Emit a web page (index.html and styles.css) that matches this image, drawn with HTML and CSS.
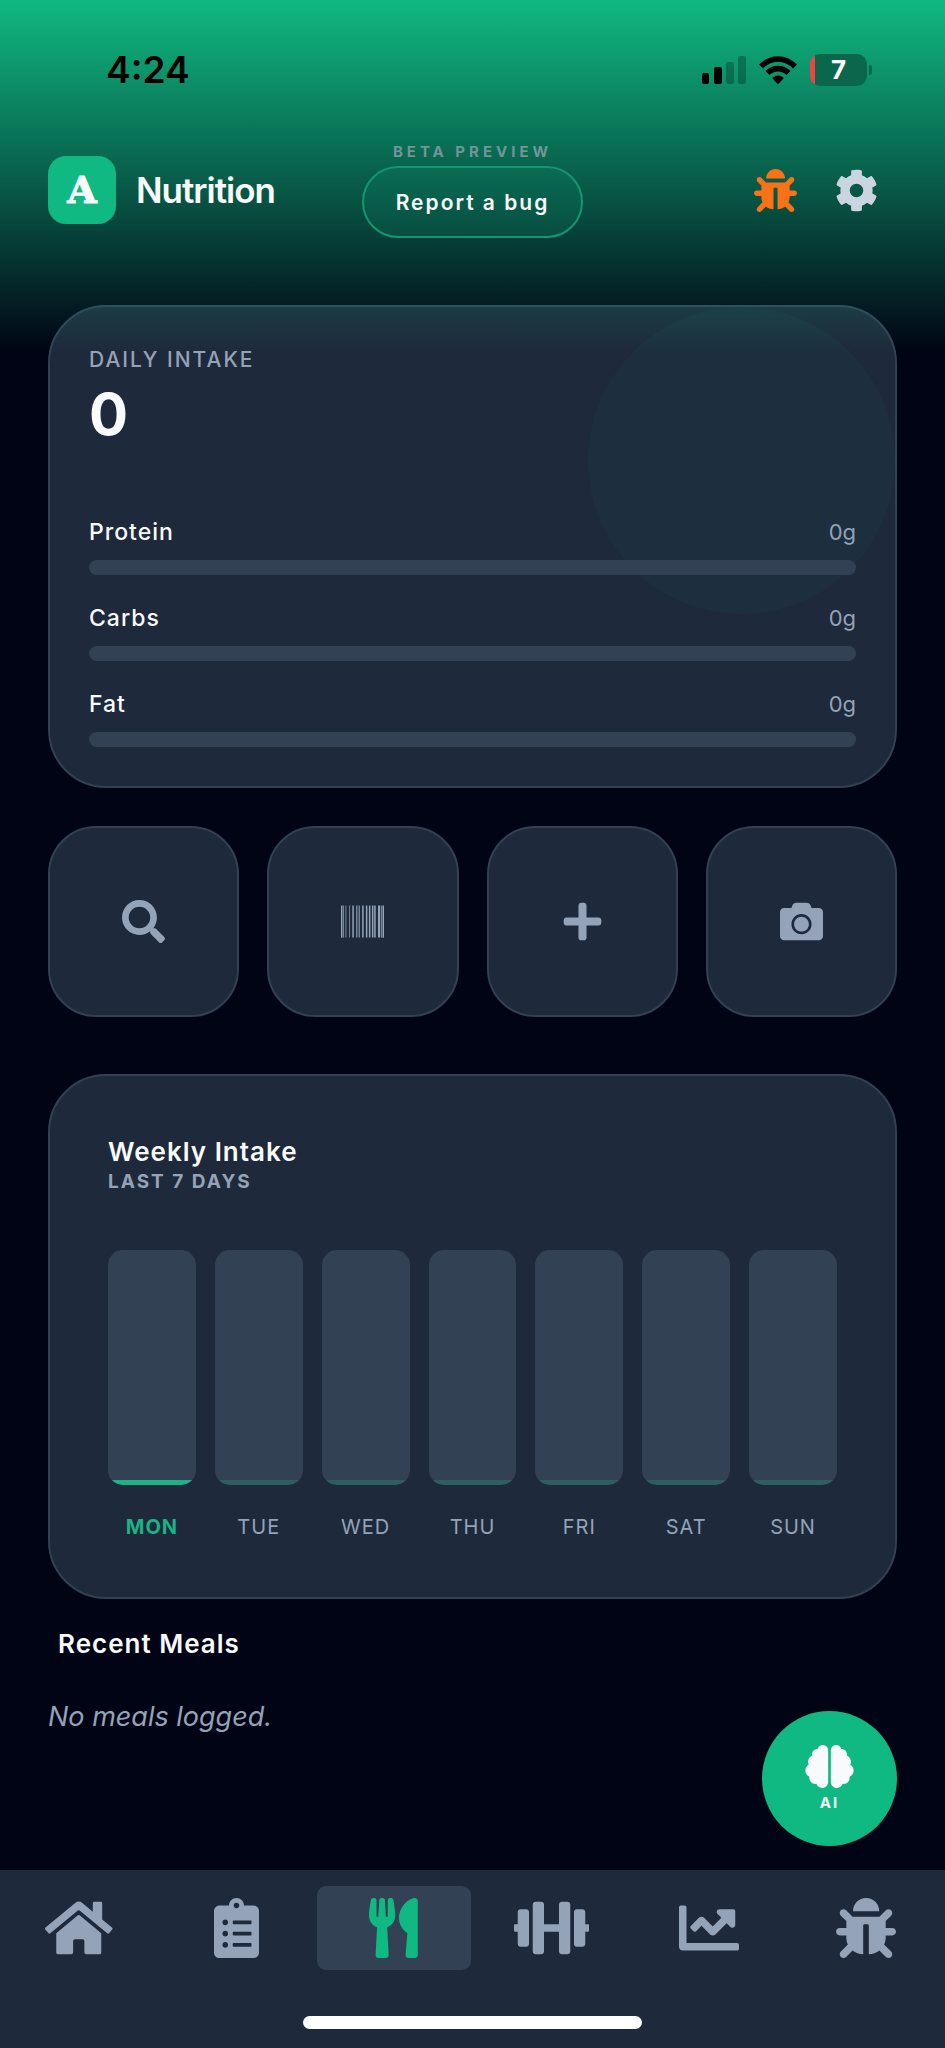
FILE: index.html
```html
<!DOCTYPE html>
<html lang="en">
<head>
<meta charset="utf-8">
<meta name="viewport" content="width=device-width, initial-scale=1">
<title>Nutrition</title>
<link rel="stylesheet" href="styles.css">
</head>
<body class="app">
<svg class="sprite" aria-hidden="true">
  <symbol id="bug" viewBox="0 0 512 512"><path d="M511.988 288.9c-.478 17.43-15.217 31.1-32.653 31.1H424v16c0 21.864-4.882 42.584-13.6 61.145l60.228 60.228c12.496 12.497 12.496 32.758 0 45.255-12.498 12.497-32.759 12.496-45.256 0l-54.736-54.736C345.886 467.965 314.351 480 280 480V236c0-6.627-5.373-12-12-12h-24c-6.627 0-12 5.373-12 12v244c-34.351 0-65.886-12.035-90.636-32.108l-54.736 54.736c-12.498 12.497-32.759 12.496-45.256 0-12.496-12.497-12.496-32.758 0-45.255l60.228-60.228C92.882 378.584 88 357.864 88 336v-16H32.666C15.23 320 .491 306.33.013 288.9-.484 270.816 14.028 256 32 256h56v-58.745l-46.628-46.628c-12.496-12.497-12.496-32.758 0-45.255 12.498-12.497 32.758-12.497 45.256 0L141.255 160h229.489l54.627-54.627c12.498-12.497 32.758-12.497 45.256 0 12.496 12.497 12.496 32.758 0 45.255L424 197.255V256h56c17.972 0 32.484 14.816 31.988 32.9zM257 0c-61.856 0-112 50.144-112 112h224C369 50.144 318.856 0 257 0z"/></symbol>
</svg>
<div class="glow"></div>

<div class="status">
  <span class="status-time">4:24</span>
  <div class="status-icons">
    <svg class="signal" viewBox="0 0 44 28" aria-hidden="true">
      <rect x="0" y="17" width="7" height="11" rx="2"/><rect x="12" y="11" width="8" height="17" rx="2"/>
      <g opacity=".25"><rect x="24" y="6" width="8" height="22" rx="2"/><rect x="36" y="0" width="8" height="28" rx="2"/></g>
    </svg>
    <svg class="wifi" viewBox="0 0 38 28" aria-hidden="true">
      <g fill="none" stroke="#000" stroke-width="5.6"><path d="M2 10.5Q9.500 3 19 3Q28.500 3 36 10.500"/><path d="M8.500 17Q13 12.600 19 12.600Q25 12.600 29.500 17"/></g>
      <path d="M13.200 22Q19 17.200 24.800 22L20.200 27.200Q19 28.400 17.800 27.200Z"/>
    </svg>
    <div class="battery"><span class="battery-text">7</span></div>
  </div>
</div>

<header class="header">
  <div class="brand"><span class="logo">A</span><h1 class="brand-name">Nutrition</h1></div>
  <div class="beta"><span class="beta-label">BETA PREVIEW</span><button class="report" type="button">Report a bug</button></div>
  <div class="tools">
    <button class="tool tool-bug" type="button" aria-label="Bug"><svg viewBox="0 0 512 512"><use href="#bug"/></svg></button>
    <button class="tool tool-cog" type="button" aria-label="Settings"><svg viewBox="0 0 512 512"><path d="M487.4 315.7l-42.6-24.6c4.3-23.2 4.3-47 0-70.2l42.6-24.6c4.9-2.8 7.1-8.6 5.5-14-11.1-35.6-30-67.8-54.7-94.6-3.8-4.1-10-5.1-14.8-2.3L380.8 110c-17.9-15.4-38.5-27.3-60.8-35.1V25.8c0-5.600-3.900-10.500-9.400-11.700-36.700-8.200-74.300-7.800-109.200 0-5.500 1.200-9.400 6.100-9.400 11.700V75c-22.200 7.900-42.800 19.800-60.800 35.100L88.700 85.500c-4.900-2.800-11-1.900-14.800 2.300-24.700 26.700-43.600 58.900-54.700 94.600-1.700 5.400.6 11.200 5.500 14L67.300 221c-4.300 23.200-4.300 47 0 70.200l-42.600 24.600c-4.900 2.800-7.100 8.600-5.500 14 11.100 35.600 30 67.800 54.700 94.600 3.800 4.100 10 5.100 14.800 2.300l42.600-24.600c17.900 15.400 38.500 27.300 60.800 35.100v49.200c0 5.600 3.900 10.500 9.400 11.700 36.700 8.200 74.300 7.800 109.200 0 5.500-1.200 9.400-6.100 9.400-11.700v-49.200c22.200-7.900 42.800-19.800 60.800-35.100l42.600 24.600c4.900 2.800 11 1.900 14.800-2.300 24.700-26.700 43.600-58.900 54.700-94.600 1.500-5.500-.7-11.300-5.600-14.100zM256 336c-44.100 0-80-35.900-80-80s35.900-80 80-80 80 35.900 80 80-35.900 80-80 80z"/></svg></button>
  </div>
</header>

<main class="content">
  <section class="card daily">
    <div class="halo"></div>
    <h2 class="daily-label">DAILY INTAKE</h2>
    <p class="daily-value">0</p>
    <div class="macros">
      <div class="macro"><div class="macro-head"><span class="macro-name">Protein</span><span class="macro-value">0g</span></div><div class="track"></div></div>
      <div class="macro"><div class="macro-head"><span class="macro-name">Carbs</span><span class="macro-value">0g</span></div><div class="track"></div></div>
      <div class="macro"><div class="macro-head"><span class="macro-name">Fat</span><span class="macro-value">0g</span></div><div class="track"></div></div>
    </div>
  </section>

  <div class="actions">
    <button class="action" type="button" aria-label="Search"><svg class="icon-md" viewBox="0 0 512 512"><path d="M505 442.700L405.300 343c-4.500-4.500-10.600-7-17-7H372c27.600-35.300 44-79.700 44-128C416 93.100 322.900 0 208 0S0 93.100 0 208s93.100 208 208 208c48.300 0 92.700-16.400 128-44v16.300c0 6.400 2.500 12.500 7 17l99.700 99.700c9.400 9.400 24.600 9.400 33.900 0l28.300-28.300c9.400-9.400 9.400-24.600.1-34zM208 336c-70.700 0-128-57.200-128-128 0-70.700 57.200-128 128-128 70.700 0 128 57.200 128 128 0 70.700-57.200 128-128 128z"/></svg></button>
    <button class="action" type="button" aria-label="Scan barcode"><svg class="icon-md" viewBox="0 0 512 512"><path d="M0 448V64h18v384H0zm26.857-.273V64H36v383.727h-9.143zm27.143 0V64h8.857v383.727H54zm44.857 0V64h8.857v383.727h-8.857zm36 0V64h17.714v383.727h-17.714zm44.857 0V64h8.857v383.727h-8.857zm18 0V64h8.857v383.727h-8.857zm18 0V64h8.857v383.727h-8.857zm35.715 0V64h18v383.727h-18zm44.857 0V64h18v383.727h-18zm35.999 0V64h18.001v383.727h-18.001zm36.001 0V64h18.001v383.727h-18.001zm26.857 0V64h18v383.727h-18zm45.143 0V64h26.857v383.727h-26.857zm35.714 0V64h9.143v383.727H476zm18 .273V64h18v384h-18z"/></svg></button>
    <button class="action" type="button" aria-label="Add"><svg class="icon-md" viewBox="-32 0 512 512"><path d="M416 208H272V64c0-17.670-14.330-32-32-32h-32c-17.670 0-32 14.330-32 32v144H32c-17.670 0-32 14.330-32 32v32c0 17.670 14.330 32 32 32h144v144c0 17.670 14.330 32 32 32h32c17.670 0 32-14.330 32-32V304h144c17.670 0 32-14.330 32-32v-32c0-17.670-14.330-32-32-32z"/></svg></button>
    <button class="action" type="button" aria-label="Take photo"><svg class="icon-md" viewBox="0 0 512 512"><path d="M512 144v288c0 26.500-21.500 48-48 48H48c-26.500 0-48-21.500-48-48V144c0-26.500 21.500-48 48-48h88l12.300-32.900c7-18.700 24.900-31.100 44.900-31.100h125.500c20 0 37.900 12.400 44.900 31.100L376 96h88c26.500 0 48 21.500 48 48zM376 288c0-66.200-53.800-120-120-120s-120 53.800-120 120 53.800 120 120 120 120-53.800 120-120zm-32 0c0 48.500-39.500 88-88 88s-88-39.500-88-88 39.500-88 88-88 88 39.500 88 88z"/></svg></button>
  </div>

  <section class="card weekly">
    <h2 class="title">Weekly Intake</h2>
    <p class="subtitle">LAST 7 DAYS</p>
    <div class="week">
      <div class="day today"><div class="bar"></div><span class="day-name">MON</span></div>
      <div class="day"><div class="bar"></div><span class="day-name">TUE</span></div>
      <div class="day"><div class="bar"></div><span class="day-name">WED</span></div>
      <div class="day"><div class="bar"></div><span class="day-name">THU</span></div>
      <div class="day"><div class="bar"></div><span class="day-name">FRI</span></div>
      <div class="day"><div class="bar"></div><span class="day-name">SAT</span></div>
      <div class="day"><div class="bar"></div><span class="day-name">SUN</span></div>
    </div>
  </section>

  <section class="recent">
    <h2 class="title recent-title">Recent Meals</h2>
    <p class="empty">No meals logged.</p>
  </section>

  <button class="fab" type="button">
    <svg class="fab-icon" viewBox="0 0 576 512" aria-hidden="true"><path d="M208 0c-29.900 0-54.700 20.500-61.800 48.200-.8 0-1.400-.2-2.200-.2-35.300 0-64 28.700-64 64 0 4.800.6 9.500 1.700 14C52.500 138 32 166.600 32 200c0 12.600 3.200 24.300 8.300 34.900C16.300 248.700 0 274.300 0 304c0 33.300 20.400 61.900 49.400 73.900-.9 4.600-1.400 9.300-1.400 14.100 0 39.800 32.200 72 72 72 4.100 0 8.100-.5 12-1.200 9.600 28.500 36.200 49.200 68 49.200 39.800 0 72-32.200 72-72V64c0-35.300-28.700-64-64-64zm368 304c0-29.700-16.300-55.300-40.300-69.100 5.200-10.600 8.300-22.300 8.300-34.900 0-33.400-20.500-62-49.700-74 1-4.500 1.700-9.200 1.700-14 0-35.300-28.700-64-64-64-.8 0-1.500.2-2.200.2C422.700 20.500 397.900 0 368 0c-35.300 0-64 28.600-64 64v376c0 39.800 32.200 72 72 72 31.800 0 58.400-20.700 68-49.200 3.900.7 7.900 1.200 12 1.200 39.800 0 72-32.200 72-72 0-4.800-.5-9.500-1.400-14.100 29-12 49.400-40.600 49.400-73.900z"/></svg>
    <span>AI</span>
  </button>
</main>

<footer class="dock">
  <nav class="tabs">
    <a class="tab" href="#" aria-label="Home"><svg viewBox="0 0 576 512"><path d="M280.370 148.260L96 300.110V464a16 16 0 0 0 16 16l112.060-.29a16 16 0 0 0 15.920-16V368a16 16 0 0 1 16-16h64a16 16 0 0 1 16 16v95.640a16 16 0 0 0 16 16.050L464 480a16 16 0 0 0 16-16V300L295.670 148.260a12.190 12.190 0 0 0-15.300 0zM571.600 251.470L488 182.560V44.050a12 12 0 0 0-12-12h-56a12 12 0 0 0-12 12v72.610L318.470 43a48 48 0 0 0-61 0L4.340 251.470a12 12 0 0 0-1.600 16.900l25.500 31A12 12 0 0 0 45.150 301l235.220-193.740a12.190 12.190 0 0 1 15.300 0L530.900 301a12 12 0 0 0 16.900-1.600l25.500-31a12 12 0 0 0-1.700-16.930z"/></svg></a>
    <a class="tab" href="#" aria-label="Log"><svg viewBox="0 0 384 512"><path d="M336 64h-80c0-35.300-28.700-64-64-64s-64 28.700-64 64H48C21.500 64 0 85.500 0 112v352c0 26.500 21.500 48 48 48h288c26.500 0 48-21.500 48-48V112c0-26.500-21.500-48-48-48zM96 424c-13.300 0-24-10.700-24-24s10.700-24 24-24 24 10.700 24 24-10.700 24-24 24zm0-96c-13.300 0-24-10.700-24-24s10.700-24 24-24 24 10.700 24 24-10.700 24-24 24zm0-96c-13.300 0-24-10.700-24-24s10.700-24 24-24 24 10.700 24 24-10.700 24-24 24zm96-192c13.300 0 24 10.700 24 24s-10.700 24-24 24-24-10.700-24-24 10.700-24 24-24zm128 368c0 4.400-3.600 8-8 8H168c-4.400 0-8-3.600-8-8v-16c0-4.400 3.600-8 8-8h144c4.400 0 8 3.600 8 8v16zm0-96c0 4.400-3.600 8-8 8H168c-4.400 0-8-3.600-8-8v-16c0-4.400 3.600-8 8-8h144c4.400 0 8 3.600 8 8v16zm0-96c0 4.400-3.600 8-8 8H168c-4.400 0-8-3.600-8-8v-16c0-4.400 3.600-8 8-8h144c4.400 0 8 3.600 8 8v16z"/></svg></a>
    <a class="tab active" href="#" aria-label="Nutrition" aria-current="page"><svg viewBox="0 0 416 512"><path d="M207.900 15.200c.8 4.700 16.100 94.500 16.100 128.800 0 52.300-27.800 89.600-68.900 104.600L168 486.700c.7 13.700-10.200 25.300-24 25.300H80c-13.700 0-24.700-11.500-24-25.300l12.900-238.100C27.700 233.600 0 196.200 0 144 0 109.600 15.300 19.900 16.100 15.200 19.300-5.100 61.400-5.400 64 16.300v141.200c1.300 3.400 15.100 3.200 16 0 1.400-25.300 7.900-139.200 8-141.800 3.300-20.800 44.700-20.800 47.900 0 .2 2.700 6.600 116.500 8 141.800.9 3.200 14.800 3.400 16 0V16.300c2.600-21.600 44.800-21.400 48-1.100zm119.200 285.700l-15 185.100c-1.200 14 9.900 26 23.900 26h56c13.300 0 24-10.700 24-24V24c0-13.200-10.700-24-24-24-82.500 0-221.400 178.500-64.900 300.900z"/></svg></a>
    <a class="tab" href="#" aria-label="Workouts"><svg viewBox="0 0 640 512"><path d="M104 96H56c-13.300 0-24 10.700-24 24v104H8c-4.400 0-8 3.600-8 8v48c0 4.400 3.600 8 8 8h24v104c0 13.300 10.700 24 24 24h48c13.300 0 24-10.700 24-24V120c0-13.300-10.700-24-24-24zm528 128h-24V120c0-13.300-10.700-24-24-24h-48c-13.300 0-24 10.700-24 24v272c0 13.300 10.700 24 24 24h48c13.300 0 24-10.700 24-24V288h24c4.400 0 8-3.600 8-8v-48c0-4.400-3.600-8-8-8zM456 32h-48c-13.300 0-24 10.700-24 24v168H256V56c0-13.300-10.700-24-24-24h-48c-13.300 0-24 10.700-24 24v400c0 13.300 10.700 24 24 24h48c13.300 0 24-10.700 24-24V288h128v168c0 13.300 10.700 24 24 24h48c13.300 0 24-10.700 24-24V56c0-13.300-10.700-24-24-24z"/></svg></a>
    <a class="tab" href="#" aria-label="Progress"><svg viewBox="0 0 512 512"><path d="M496 384H64V80c0-8.840-7.160-16-16-16H16C7.160 64 0 71.160 0 80v336c0 17.670 14.330 32 32 32h464c8.840 0 16-7.160 16-16v-32c0-8.840-7.160-16-16-16zM464 96H345.940c-21.380 0-32.090 25.850-16.970 40.970l32.400 32.400L288 242.750l-73.370-73.370c-12.500-12.500-32.760-12.500-45.250 0l-68.690 68.690c-6.250 6.250-6.250 16.380 0 22.630l22.620 22.620c6.250 6.250 16.380 6.250 22.630 0L192 237.250l73.370 73.370c12.500 12.500 32.760 12.500 45.250 0l96-96 32.400 32.400c15.120 15.120 40.970 4.410 40.970-16.970V112c.01-8.840-7.150-16-15.990-16z"/></svg></a>
    <a class="tab" href="#" aria-label="Bugs"><svg viewBox="0 0 512 512"><use href="#bug"/></svg></a>
  </nav>
  <div class="home-indicator"></div>
</footer>
</body>
</html>
```

FILE: styles.css
```css
* { box-sizing: border-box; }

:root {
  --green: #10b981;
  --card: #1e293b;
  --line: #334155;
  --muted: #94a3b8;
  --text: #f8fafc;
}

.app {
  margin: 0;
  min-height: 100vh;
  display: flex;
  flex-direction: column;
  position: relative;
  background: #010414;
  color: var(--text);
  font-family: Inter, "Liberation Sans", sans-serif;
}

h1, h2, p { margin: 0; }
button { font-family: inherit; color: inherit; cursor: pointer; }
svg { display: block; fill: currentColor; }
.sprite { position: absolute; width: 0; height: 0; }

.glow {
  position: absolute;
  top: 0;
  left: 0;
  right: 0;
  height: 353px;
  z-index: 1;
  pointer-events: none;
  background: linear-gradient(rgba(16, 185, 129, 1), rgba(16, 185, 129, 0));
}

/* Status bar */
.status {
  position: relative;
  z-index: 2;
  height: 142px;
  padding: 46px 73px 0 106px;
  display: flex;
  justify-content: space-between;
  align-items: flex-start;
  color: #000;
}
.status-time { font-size: 37px; line-height: 48px; font-weight: 600; }
.status-icons { display: flex; align-items: center; gap: 13px; height: 48px; }
.signal { width: 44px; height: 28px; }
.wifi { width: 38px; height: 28px; }
.battery {
  position: relative;
  width: 57px;
  height: 32px;
  margin-right: 5px;
  border-radius: 10px;
  background: linear-gradient(90deg, #ef4444 5px, #0a674b 5px);
  display: flex;
  align-items: center;
  justify-content: center;
}
.battery::after {
  content: "";
  position: absolute;
  left: 59px;
  top: 11px;
  width: 3px;
  height: 10px;
  border-radius: 0 3px 3px 0;
  background: #0a674b;
}
.battery-text { color: #fff; font-size: 26px; line-height: 32px; font-weight: 700; }

/* Header */
.header {
  position: relative;
  z-index: 2;
  display: grid;
  grid-template-columns: 1fr auto 1fr;
  align-items: center;
  padding: 0 48px;
}
.brand { display: flex; align-items: center; gap: 20px; }
.logo {
  width: 68px;
  height: 68px;
  border-radius: 18px;
  background: var(--green);
  display: flex;
  align-items: center;
  justify-content: center;
  font: 700 38px/48px "DejaVu Serif", serif;
  -webkit-text-stroke: 1px currentColor;
}
.brand-name { font-size: 35px; line-height: 40px; font-weight: 600; letter-spacing: -1px; }
.beta { display: flex; flex-direction: column; align-items: center; gap: 4px; }
.beta-label { font-size: 15px; line-height: 20px; font-weight: 700; letter-spacing: 4px; color: #71969a; }
.report {
  height: 72px;
  padding: 0 32px;
  border: 2px solid #14966f;
  border-radius: 36px;
  background: rgba(16, 185, 129, 0.12);
  font-size: 21px;
  font-weight: 600;
  letter-spacing: 2px;
}
.tools { display: flex; justify-content: flex-end; gap: 38px; padding-right: 19px; }
.tool { padding: 0; border: 0; background: none; }
.tool svg { width: 43px; height: 43px; }
.tool-bug { color: #f97316; }
.tool-cog { color: #cbd5e1; }

/* Content */
.content {
  position: relative;
  flex: 1;
  padding: 67px 48px 0;
}
.card {
  position: relative;
  overflow: hidden;
  border: 2px solid var(--line);
  border-radius: 58px;
  background: var(--card);
}
.daily { padding: 39px; }
.halo {
  position: absolute;
  top: 0;
  right: 0;
  width: 307px;
  height: 307px;
  border-radius: 50%;
  background: rgba(16, 185, 129, 0.05);
}
.daily-label { font-size: 21px; line-height: 28px; font-weight: 500; letter-spacing: 2px; color: var(--muted); }
.daily-value { margin-top: 8px; font-size: 58px; line-height: 64px; font-weight: 700; }
.macros { position: relative; display: grid; gap: 29px; margin-top: 72px; }
.macro { display: grid; gap: 14px; }
.macro-head { display: flex; justify-content: space-between; font-size: 23px; line-height: 28px; }
.macro-name { font-weight: 500; letter-spacing: 1px; }
.macro-value { font-size: 22px; color: var(--muted); }
.track { height: 15px; border-radius: 8px; background: var(--line); }

.actions {
  display: grid;
  grid-template-columns: repeat(4, 1fr);
  gap: 28px;
  margin: 38px 0 57px;
}
.action {
  aspect-ratio: 1;
  display: flex;
  align-items: center;
  justify-content: center;
  padding: 0;
  border: 2px solid var(--line);
  border-radius: 48px;
  background: var(--card);
  color: var(--muted);
}
.icon-md { width: 43px; height: 43px; }

.weekly { padding: 58px 58px 56px; }
.title { font-size: 26px; line-height: 36px; font-weight: 600; letter-spacing: 1px; }
.subtitle { font-size: 19px; line-height: 24px; font-weight: 700; letter-spacing: 2px; color: var(--muted); }
.week { display: grid; grid-template-columns: repeat(7, 1fr); gap: 19px; margin-top: 56px; }
.day { display: flex; flex-direction: column; gap: 28px; text-align: center; }
.bar {
  height: 235px;
  border-radius: 15px;
  background: linear-gradient(0deg, #2f5d62 5px, var(--line) 5px);
}
.today .bar { background: linear-gradient(0deg, #1cb285 5px, var(--line) 5px); }
.day-name { font-size: 20px; line-height: 28px; letter-spacing: 1px; color: var(--muted); }
.today .day-name { font-weight: 700; color: #1cb285; }

.recent { padding: 27px 0 80px; }
.recent-title { padding-left: 10px; }
.empty { margin-top: 38px; font-size: 27px; line-height: 34px; font-style: italic; color: var(--muted); }

.fab {
  position: absolute;
  right: 48px;
  bottom: 24px;
  width: 135px;
  height: 135px;
  padding: 0;
  border: 0;
  border-radius: 50%;
  background: var(--green);
  display: flex;
  flex-direction: column;
  align-items: center;
  justify-content: center;
  gap: 5px;
  font-size: 15px;
  line-height: 20px;
  font-weight: 700;
  letter-spacing: 2px;
}
.fab-icon { width: 49px; height: 43px; }

/* Bottom navigation */
.dock { padding: 16px 2px 19px; background: var(--card); }
.tabs { display: grid; grid-template-columns: repeat(6, 1fr); gap: 4px; }
.tab {
  height: 84px;
  display: flex;
  align-items: center;
  justify-content: center;
  border-radius: 9px;
  color: var(--muted);
}
.tab svg { height: 60px; }
.tab.active { background: var(--line); color: var(--green); }
.home-indicator {
  width: 36%;
  height: 13px;
  margin: 46px auto 0;
  border-radius: 7px;
  background: #fff;
}
```
